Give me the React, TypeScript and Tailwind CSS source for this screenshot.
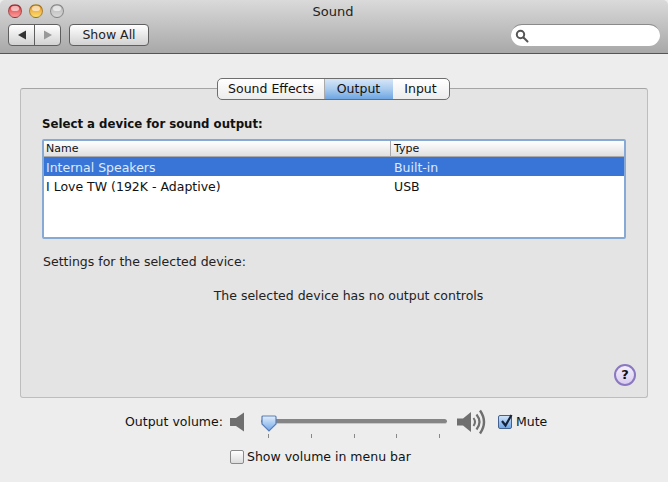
const font = { fontFamily: '"DejaVu Sans", sans-serif' };

const TrafficLight = ({ className }: { className: string }) => (
  <div className={`relative w-[14px] h-[14px] rounded-full border border-black/30 ${className}`}>
    <div className="absolute left-[2px] top-[1px] w-[8px] h-[5px] rounded-full bg-white/60" />
  </div>
);

const LowSpeaker = () => (
  <svg width="15" height="20" viewBox="0 0 15 20">
    <path d="M0 6 H6 L14 0.5 V19.5 L6 14 H0 Z" fill="#6f6f6f" />
  </svg>
);

const HighSpeaker = () => (
  <svg width="31" height="26" viewBox="0 0 31 26">
    <path d="M0 9.5 H6 L14 3 V23 L6 16.5 H0 Z" fill="#6f6f6f" />
    <path d="M16.5 9 Q19.5 13 16.5 17" stroke="#6f6f6f" strokeWidth="2" fill="none" />
    <path d="M19.5 5.5 Q25.5 13 19.5 20.5" stroke="#6f6f6f" strokeWidth="2.2" fill="none" />
    <path d="M23 1.5 Q31 13 23 24.5" stroke="#6f6f6f" strokeWidth="2.4" fill="none" />
  </svg>
);

export default function App() {
  return (
    <div className="w-[668px] h-[482px] overflow-hidden bg-[#ededed] text-[12.5px] text-[#111]" style={font}>
      <div className="h-[54px] rounded-t-[5px] border-b border-[#555] bg-gradient-to-b from-[#dadada] to-[#a8a8a8] px-[8px]">
        <div className="grid grid-cols-[1fr_auto_1fr] items-center h-[23px]">
          <div className="flex items-center gap-[7px] -mt-[1px]">
            <TrafficLight className="bg-gradient-to-b from-[#d02f38] to-[#ff9a9c]" />
            <TrafficLight className="bg-gradient-to-b from-[#e08e14] to-[#ffdf70]" />
            <TrafficLight className="bg-gradient-to-b from-[#b5b5b5] to-[#d8d8d8]" />
          </div>
          <div className="text-[13px] text-[#222] -translate-x-[1px]">Sound</div>
          <div />
        </div>
        <div className="flex items-center h-[22px] mt-[1px]">
          <div className="flex w-[53px] h-[22px] rounded-[4px] border border-[#5f5f5f] bg-gradient-to-b from-white to-[#d2d2d2]">
            <div className="flex-1 flex items-center justify-center border-r border-[#5f5f5f]">
              <svg width="10" height="10" viewBox="0 0 10 10"><path d="M1 5 L9 0.5 V9.5 Z" fill="#333" /></svg>
            </div>
            <div className="flex-1 flex items-center justify-center">
              <svg width="10" height="10" viewBox="0 0 10 10"><path d="M9 5 L1 0.5 V9.5 Z" fill="#999" /></svg>
            </div>
          </div>
          <div className="ml-[8px] w-[80px] h-[22px] flex items-center justify-center rounded-[4px] border border-[#5f5f5f] bg-gradient-to-b from-white to-[#d2d2d2] text-[#222]">
            Show All
          </div>
          <div className="ml-auto w-[149px] h-[22px] flex items-center rounded-full bg-white border-t border-[#8a8a8a] pl-[4px]">
            <svg width="14" height="14" viewBox="0 0 14 14" fill="none" stroke="#555" strokeWidth="2">
              <circle cx="5.5" cy="5.5" r="3.7" />
              <path d="M8.5 8.5 L12.5 12.5" strokeLinecap="round" />
            </svg>
          </div>
        </div>
      </div>

      <div className="mx-[20px] mt-[34px] h-[310px] rounded-[3px] border border-[#bdbdbd] border-t-[#a5a5a5] bg-[#e4e4e4]">
        <div className="flex justify-center -mt-[11px]">
          <div className="flex h-[22px] rounded-[5px] border border-[#6e6e6e] bg-gradient-to-b from-white to-[#ececec] overflow-hidden -translate-x-[1px]">
            <div className="w-[107px] flex items-center justify-center border-r border-[#aaa] pl-[1px]">Sound Effects</div>
            <div className="w-[68px] flex items-center justify-center bg-gradient-to-b from-[#d6e6f7] via-[#a9cbee] to-[#6ea5e2]">Output</div>
            <div className="w-[56px] flex items-center justify-center">Input</div>
          </div>
        </div>
        <div className="pl-[21px] pr-[21px] pt-[16px]">
          <div className="font-bold text-[11.75px] leading-[16px]">Select a device for sound output:</div>
          <div className="mt-[7px] h-[100px] bg-white rounded-[2px] border-2 border-[#86a9d6] overflow-hidden">
            <div className="flex h-[16px] leading-[15px] text-[11px] border-b border-[#aaa] bg-gradient-to-b from-white via-[#f0f0f0] to-[#e0e0e0]">
              <div className="w-[347px] pl-[2px] border-r border-[#aaa]">Name</div>
              <div className="pl-[3px]">Type</div>
            </div>
            <div className="flex h-[19px] items-center pt-[3px] bg-[#3875d7] text-[#dfe9fa]">
              <div className="w-[347px] pl-[2px]">Internal Speakers</div>
              <div className="pl-[3px]">Built-in</div>
            </div>
            <div className="flex h-[20px] items-center pt-[3px]">
              <div className="w-[347px] pl-[2px]">I Love TW (192K - Adaptive)</div>
              <div className="pl-[3px]">USB</div>
            </div>
          </div>
          <div className="mt-[15px] pl-[1px] leading-[16px] text-[#222]">Settings for the selected device:</div>
          <div className="mt-[18px] text-center leading-[16px] text-[#222] pl-[29px]">The selected device has no output controls</div>
          <div className="flex justify-end mt-[60px] -mr-[10px]">
            <div className="w-[22px] h-[22px] rounded-full border-2 border-[#8a78c0] bg-gradient-to-b from-[#f4eefc] to-[#d9cdf0] flex items-center justify-center font-bold text-[13px] text-[#111]">
              ?
            </div>
          </div>
        </div>
      </div>

      <div className="flex items-center h-[26px] mt-[11px] pl-[125px]">
        <span className="w-[105px]">Output volume:</span>
        <LowSpeaker />
        <div className="relative ml-[16px] w-[186px] h-[26px]">
          <div className="absolute left-0 right-0 top-[10px] h-[5px] rounded-full bg-[#858585] border-b border-[#c8c8c8]" />
          <svg className="absolute left-[0px] top-[6px]" width="16" height="17" viewBox="0 0 16 17">
            <defs>
              <linearGradient id="knob" x1="0" y1="0" x2="0" y2="1">
                <stop offset="0" stopColor="#e2eefb" />
                <stop offset="1" stopColor="#6fa5e8" />
              </linearGradient>
            </defs>
            <path d="M1 2 Q1 1 2 1 H14 Q15 1 15 2 V9 L8 16 L1 9 Z" fill="url(#knob)" stroke="#5a7fb5" strokeWidth="1.2" />
          </svg>
          <div className="absolute left-0 right-0 top-[25px] px-[7px] flex justify-between">
            <div className="w-px h-[4px] bg-[#888]" />
            <div className="w-px h-[4px] bg-[#888]" />
            <div className="w-px h-[4px] bg-[#888]" />
            <div className="w-px h-[4px] bg-[#888]" />
            <div className="w-px h-[4px] bg-[#888]" />
          </div>
        </div>
        <div className="ml-[10px]"><HighSpeaker /></div>
        <div className="relative ml-[10px] w-[14px] h-[14px] rounded-[2px] border border-[#44628f] bg-gradient-to-b from-[#cfe2f8] to-[#6fa6e5]">
          <svg className="absolute -top-[3px] left-0" width="15" height="16" viewBox="0 0 15 16" fill="none" stroke="#14233c" strokeWidth="2.2">
            <path d="M3 8 L6.5 12.5 L12.5 2" />
          </svg>
        </div>
        <span className="ml-[4px]">Mute</span>
      </div>

      <div className="flex items-center h-[16px] mt-[14px] pl-[230px]">
        <div className="w-[14px] h-[14px] rounded-[2px] border border-[#8a8a8a] bg-gradient-to-b from-white to-[#dcdcdc]" />
        <span className="ml-[3px]">Show volume in menu bar</span>
      </div>
    </div>
  );
}
